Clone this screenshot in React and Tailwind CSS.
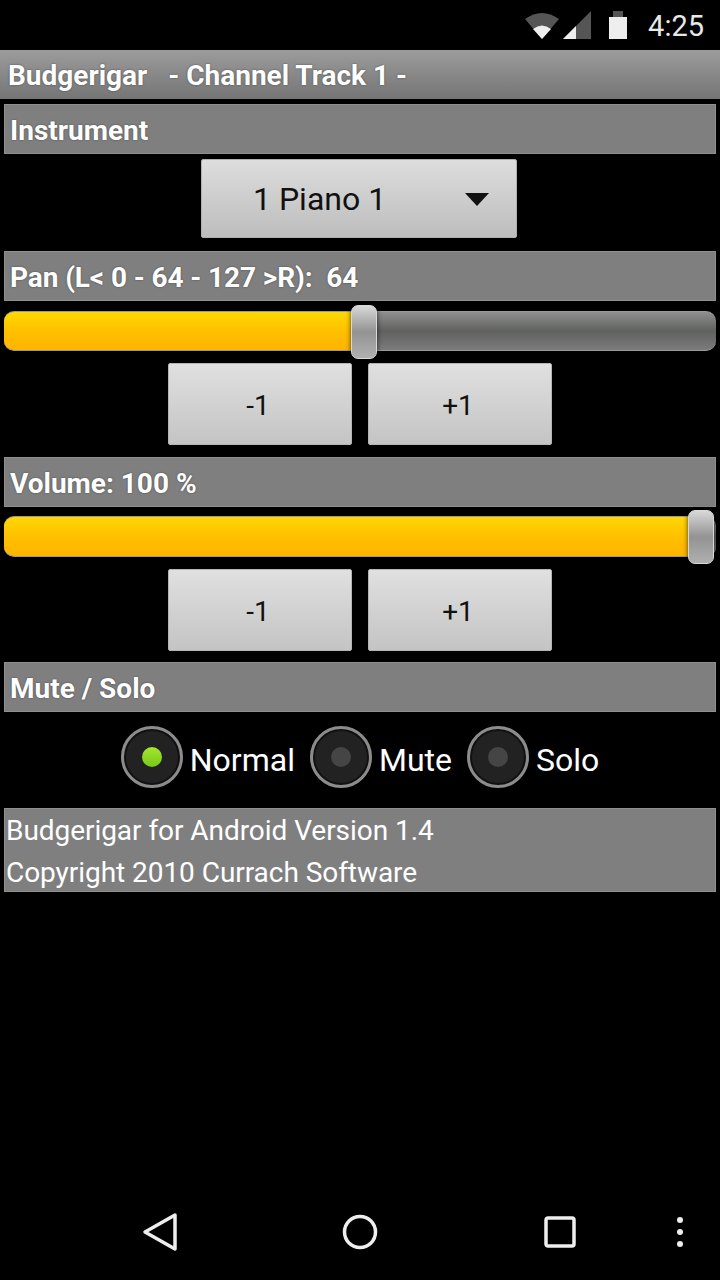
import React from "react";

const font = { fontFamily: "Roboto, sans-serif" };

function SectionBar({ children, className = "" }) {
  return (
    <div className={`mx-1 h-[50px] flex items-center pl-[5px] pt-[3px] bg-[#7f7f7f] border border-[#8f8f8f] text-white font-bold text-[28px] whitespace-pre [text-shadow:0_0_2px_#444] ${className}`}>
      {children}
    </div>
  );
}

function GrayButton({ children, className = "" }) {
  return (
    <button className={`flex items-center justify-center pr-[4px] pt-[3px] rounded-[2px] border border-[#b5b5b5] bg-gradient-to-b from-[#e0e0e0] to-[#c4c4c4] text-[#111] text-[28px] ${className}`}>
      {children}
    </button>
  );
}

function Stepper({ className = "" }) {
  return (
    <div className={`flex justify-center gap-4 ${className}`}>
      <GrayButton className="w-[184px] h-[82px]">-1</GrayButton>
      <GrayButton className="w-[184px] h-[82px]">+1</GrayButton>
    </div>
  );
}

function Slider({ percent, className = "" }) {
  return (
    <div className={`relative mx-1 ${className}`}>
      <div className="h-full rounded-[10px] overflow-hidden flex border-y border-[#9a9a9a] bg-gradient-to-b from-[#8f8f8f] via-[#5f615f] to-[#7b7b7b]">
        <div
          className="h-full bg-gradient-to-b from-[#ffd800] via-[#ffc000] to-[#ffb400]"
          style={{ width: `${percent}%` }}
        />
      </div>
      <div
        className="absolute top-[-6px] w-[26px] h-[54px] -translate-x-1/2 rounded-[7px] border border-[#d8d8d8] bg-gradient-to-b from-[#d8d8d8] via-[#939393] to-[#b0b0b0] shadow-[0_0_5px_rgba(0,0,0,0.7)]"
        style={{ left: `${percent}%` }}
      />
    </div>
  );
}

function Radio({ label, checked }) {
  return (
    <div className="flex items-center">
      <div className="w-[62px] h-[62px] rounded-full border-[3px] border-[#8c8c8c] bg-[#222] shadow-[inset_0_0_0_2px_#111] flex items-center justify-center">
        {checked ? (
          <div className="w-[20px] h-[20px] rounded-full bg-gradient-to-b from-[#a4e62e] to-[#78c81a]" />
        ) : (
          <div className="w-[20px] h-[20px] rounded-full bg-[#454545]" />
        )}
      </div>
      <span className="ml-[7px] pt-[6px] text-white text-[32px]">{label}</span>
    </div>
  );
}

export default function App() {
  return (
    <div className="w-[720px] h-[1280px] bg-black flex flex-col overflow-hidden" style={font}>
      {/* status bar */}
      <div className="h-[50px] flex items-center justify-end">
        <svg width="66" height="30" viewBox="0 0 66 30" className="mr-[17px] mt-[1px]">
          <path d="M0 8 Q17 -4 34 8 L17 28 Z" fill="#555" />
          <path d="M8 18 Q17 11 26 18 L17 28 Z" fill="#eee" />
          <path d="M38 28 L66 0 L66 28 Z" fill="#555" />
          <path d="M38 28 L51 15 L51 28 Z" fill="#eee" />
        </svg>
        <svg width="20" height="30" viewBox="0 0 20 30" className="mr-[20px] mt-[1px]">
          <rect x="5" y="0" width="10" height="6" fill="#555" />
          <rect x="1" y="6" width="18" height="22" fill="#eee" />
        </svg>
        <span className="text-[#e8e8e8] text-[29px] mr-[16px] pt-[3px]">4:25</span>
      </div>

      {/* title */}
      <div className="h-[49px] flex items-center pl-[8px] pt-[3px] bg-gradient-to-b from-[#9c9c9c] to-[#757575] text-white font-bold text-[28px] whitespace-pre [text-shadow:0_0_2px_#444]">
        {"Budgerigar   - Channel Track 1 -"}
      </div>

      <SectionBar className="mt-[5px]">Instrument</SectionBar>

      <div className="mt-[5px] flex">
        <div className="relative ml-[201px] w-[316px] h-[79px] rounded-[2px] border border-[#b0b0b0] bg-gradient-to-b from-[#dddddd] to-[#bdbdbd] flex items-center text-[#111] text-[32px] pl-[51px]">
          1 Piano 1
          <svg width="24" height="14" viewBox="0 0 24 14" className="absolute left-[263px] top-[33px]">
            <path d="M0 0 H24 L12 13 Z" fill="#111" />
          </svg>
        </div>
      </div>

      <SectionBar className="mt-[13px] tracking-[-0.1px]">{"Pan (L< 0 - 64 - 127 >R):  64"}</SectionBar>
      <Slider percent={50.5} className="mt-[10px] h-[40px]" />
      <Stepper className="mt-[12px]" />

      <SectionBar className="mt-[12px]">Volume: 100 %</SectionBar>
      <Slider percent={97.9} className="mt-[9px] h-[41px]" />
      <Stepper className="mt-[12px]" />

      <SectionBar className="mt-[11px]">Mute / Solo</SectionBar>

      <div className="mt-[14px] flex justify-center gap-[15px]">
        <Radio label="Normal" checked />
        <Radio label="Mute" />
        <Radio label="Solo" />
      </div>

      <div className="mt-[20px] mx-1 h-[84px] flex flex-col justify-center pl-[1px] pt-[3px] bg-[#7f7f7f] border border-[#8f8f8f] text-white text-[28px] leading-[42px] tracking-[-0.05px]">
        <div>Budgerigar for Android Version 1.4</div>
        <div>Copyright 2010 Currach Software</div>
      </div>

      {/* nav bar */}
      <div className="mt-auto h-[96px] flex items-center pl-[60px]">
        <div className="w-[200px] flex justify-center">
          <svg width="36" height="40" viewBox="0 0 36 40">
            <path d="M33 3 L3 20 L33 37 Z" fill="none" stroke="#eee" strokeWidth="3.5" strokeLinejoin="round" />
          </svg>
        </div>
        <div className="w-[200px] flex justify-center">
          <svg width="36" height="36" viewBox="0 0 36 36">
            <circle cx="18" cy="18" r="15.5" fill="none" stroke="#eee" strokeWidth="3.5" />
          </svg>
        </div>
        <div className="w-[200px] flex justify-center">
          <svg width="32" height="32" viewBox="0 0 32 32">
            <rect x="2" y="2" width="28" height="28" rx="2" fill="none" stroke="#eee" strokeWidth="3.5" />
          </svg>
        </div>
        <div className="w-[40px] flex flex-col items-center gap-[6px]">
          <div className="w-[6px] h-[6px] rounded-full bg-[#eee]" />
          <div className="w-[6px] h-[6px] rounded-full bg-[#eee]" />
          <div className="w-[6px] h-[6px] rounded-full bg-[#eee]" />
        </div>
      </div>
    </div>
  );
}
